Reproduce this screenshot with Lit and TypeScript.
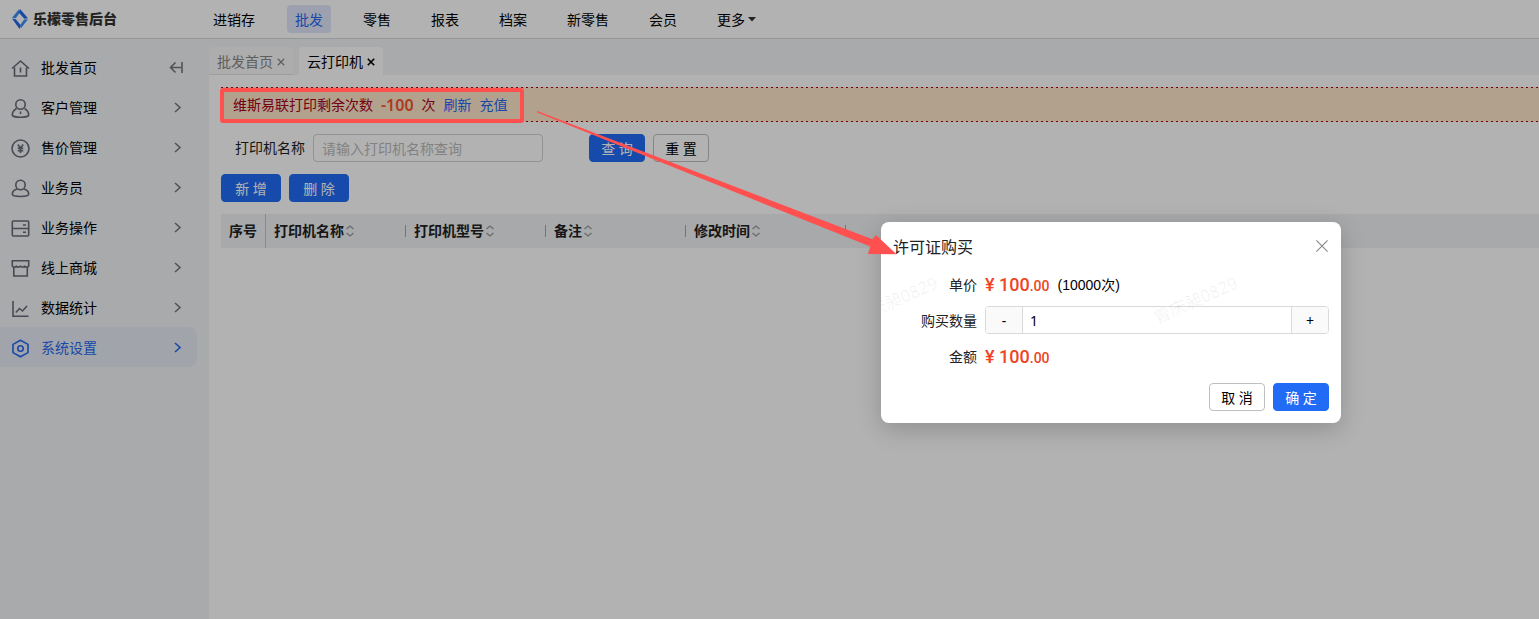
import { LitElement, html, svg, css } from "lit";
import { customElement, state } from "lit/decorators.js";
import { classMap } from "lit/directives/class-map.js";

const NAV = ["进销存", "批发", "零售", "报表", "档案", "新零售", "会员"];

const icons = {
  home: svg`<path d="M1 9.500 9.500 2l8.500 7.500M3.500 8.500V17h12V8.500M9.500 8.500v5"/>`,
  customer: svg`<circle cx="9.500" cy="5.500" r="4.700"/><path d="M5.500 9.500C3 11 1.300 13.300 1.300 16c0 1.200 3.500 2.300 8.200 2.300s8.200-1.100 8.200-2.300c0-2.700-1.700-5-4.200-6.500M9.500 12.500V15"/>`,
  price: svg`<circle cx="9.500" cy="9.500" r="8.500"/><path d="M6.800 5.500l2.700 3.500 2.700-3.500M9.500 9v5M6.800 9.300h5.400M6.800 11.600h5.400"/>`,
  staff: svg`<circle cx="9.500" cy="6" r="4.700"/><path d="M6 10C3 11 1.300 12.800 1.300 15c0 1.600 3.500 2.500 8.200 2.500s8.200-.9 8.200-2.500c0-2.200-1.700-4-4.700-5"/>`,
  operate: svg`<rect x="1.300" y="2" width="16.400" height="15" rx="1"/><path d="M1.300 9.500h16.400M12 6h3M12 13.200h3"/>`,
  shop: svg`<path d="M2.800 8v9h13.500V8M1.300 1.800h16.400V6.500c0 2.200-4 2.200-4 0 0 2-4.200 2-4.200 0 0 2-4.200 2-4.200 0 0 2.200-4 2.200-4 0z"/>`,
  chart: svg`<path d="M2 2v15.300h15.500M4.800 13.500 8.500 9.500l3 2.500 4.500-5"/>`,
  settings: svg`<path d="M9.500 1.200 17 5.400v8.200l-7.500 4.200L2 13.600V5.400z"/><circle cx="9.500" cy="9.500" r="2.700"/>`,
};

const MENU = [
  { label: "批发首页", icon: icons.home },
  { label: "客户管理", icon: icons.customer },
  { label: "售价管理", icon: icons.price },
  { label: "业务员", icon: icons.staff },
  { label: "业务操作", icon: icons.operate },
  { label: "线上商城", icon: icons.shop },
  { label: "数据统计", icon: icons.chart },
  { label: "系统设置", icon: icons.settings },
];

const COLUMNS = ["打印机名称", "打印机型号", "备注", "修改时间"];

@customElement("app-root")
export class AppRoot extends LitElement {
  @state() private quantity = 1;

  static styles = css`
    :host {
      display: block;
      position: relative;
      min-height: 100vh;
      overflow: hidden;
      font: 14px/20px "Noto Sans", "Noto Sans CJK SC", sans-serif;
      color: #000;
    }
    * { box-sizing: border-box; }
    button, input { font: inherit; color: inherit; }
    a { color: inherit; text-decoration: none; }
    svg { display: block; fill: none; flex: none; }
    .page { display: flex; flex-direction: column; min-height: 100vh; background: #f2f4f7; }
    .top { display: flex; align-items: center; height: 39px; background: #fff; border-bottom: 1px solid #d5d7db; }
    .brand { display: flex; align-items: center; gap: 5px; width: 205px; padding-left: 12px; font-weight: 900; color: #333; }
    .nav { display: flex; gap: 24px; }
    .nav a { display: flex; align-items: center; gap: 3px; height: 28px; padding: 2px 8px 0; border-radius: 4px; }
    .nav .on { background: #e1e7fb; color: #2468f2; }
    .body { display: flex; flex: 1; }
    .side { width: 209px; padding: 8px 12px 0 0; }
    .item { display: flex; align-items: center; gap: 11px; height: 40px; padding: 2px 14px 0 11px; border-radius: 0 8px 8px 0; }
    .item span { flex: 1; }
    .item .ic { stroke: #686b77; stroke-width: 1.6; }
    .item .go { stroke: #777; stroke-width: 1.6; }
    .item.on { background: #e9ebf5; color: #2468f2; }
    .item.on svg { stroke: #2468f2; }
    .main { flex: 1; min-width: 0; display: flex; flex-direction: column; }
    .tabs { display: flex; gap: 6px; padding-top: 8px; }
    .tab { display: flex; align-items: center; gap: 4px; height: 28px; padding: 2px 8px 0; border-radius: 4px 4px 0 0; background: #f8f8f9; color: #888; border-bottom: 1px solid #e2e3e6; }
    .tab svg { stroke: #888; stroke-width: 1.6; }
    .tab.on { background: #fff; color: #000; border-bottom-color: #fff; }
    .tab.on svg { stroke: #000; stroke-width: 2; }
    .panel { flex: 1; padding: 12px 0 0 12px; background: #fff; }
    .notice {
      --dots: repeating-linear-gradient(90deg, #a8001c 0 2px, transparent 2px 5px);
      display: flex; align-items: center; gap: 8px; height: 35px; padding-left: 12px; color: #a8001c;
      background: var(--dots) top / 100% 1px no-repeat, var(--dots) bottom / 100% 1px no-repeat, #ffe9cb;
    }
    .notice strong { font-size: 16px; font-weight: 600; color: #f5532e; }
    .notice a { color: #2468f2; }
    .search { display: flex; align-items: center; gap: 8px; padding: 12px 0 12px 14px; }
    .search label { color: #222; }
    .search input { width: 230px; height: 28px; margin-right: 38px; padding: 0 8px; border: 1px solid #d2d2d2; border-radius: 4px; background: #fff; }
    .search input::placeholder { color: #bbb; opacity: 1; }
    .btn { height: 28px; padding: 1px 10px 0; border: 1px solid #bfbfbf; border-radius: 4px; background: #fff; line-height: 20px; white-space: nowrap; }
    .btn.primary { border-color: #226cf5; background: #226cf5; color: #fff; }
    .tools { display: flex; gap: 8px; margin-bottom: 12px; }
    .tools .btn { width: 60px; }
    table { width: 100%; table-layout: fixed; border-collapse: separate; border-spacing: 0; }
    th { height: 34px; padding: 0 0 0 8px; background: #f0f2f5; text-align: left; font-weight: 700; color: #222; }
    th.no { width: 45px; border-right: 1px solid #c4c6ca; }
    th.col { width: 140px; }
    th.wide { width: 160px; }
    .cell { display: flex; align-items: center; gap: 1px; height: 12px; border-right: 1px solid #a5a7ad; }
    .cell svg { stroke: #999; stroke-width: 1.3; }
    .mask { position: absolute; inset: 0; display: flex; align-items: flex-start; justify-content: flex-end; padding: 222px 198px 0 0; background: rgba(0, 0, 0, 0.3); }
    .dialog { position: relative; width: 460px; padding: 12px; border-radius: 8px; background: #fff; box-shadow: 0 6px 24px rgba(0, 0, 0, 0.2); }
    .head { display: flex; align-items: center; justify-content: space-between; height: 24px; margin-bottom: 12px; }
    .head h2 { margin: 0; padding-top: 2px; font-size: 16px; line-height: 24px; font-weight: 400; color: #222; }
    .close { padding: 0; border: 0; background: none; }
    .close svg { stroke: #888; stroke-width: 0.8; }
    .rows { display: grid; grid-template-columns: 84px 1fr; gap: 8px; margin-bottom: 13px; }
    .name { padding-top: 1px; line-height: 28px; height: 28px; text-align: right; color: #222; }
    .value { display: flex; align-items: center; gap: 8px; height: 28px; padding-top: 2px; font-family: "Liberation Sans", "Noto Sans CJK SC", sans-serif; }
    .price { font: 500 18px/28px Roboto, sans-serif; color: #f04423; white-space: pre; }
    .price small { font-size: 14px; }
    .stepper { display: flex; height: 28px; border: 1px solid #d9d9d9; border-radius: 4px; overflow: hidden; }
    .stepper button { width: 36px; padding: 2px 0 0; border: 0; background: #fafafa; }
    .stepper input { flex: 1; min-width: 0; padding: 2px 7px 0; border: solid #d9d9d9; border-width: 0 1px; background: #fff; }
    .foot { display: flex; justify-content: flex-end; gap: 8px; }
    .foot .btn, .search .btn { width: 56px; }
    .marks { position: absolute; inset: 0; width: 100%; height: 100%; pointer-events: none; }
    .marks text { font-size: 17px; fill: #000; fill-opacity: 0.06; }
    .note { position: absolute; top: 0; left: 0; pointer-events: none; }
  `;

  private chevron() {
    return html`<svg class="go" width="10" height="12" viewBox="0 0 10 12"><path d="M2 1 7 5.500l-5 4.500" /></svg>`;
  }

  private cross(size: number) {
    return html`<svg width=${size} height=${size} viewBox="0 0 10 10"><path d="M1 1l8 8M9 1l-8 8" /></svg>`;
  }

  private step(by: number) {
    this.quantity = Math.max(1, this.quantity + by);
  }

  render() {
    return html`
      <div class="page">
        <header class="top">
          <div class="brand">
            <svg width="16" height="20" viewBox="0 0 16 20">
              <path fill="#3f8ef5" d="M7.200 0v4.500L3.800 9.200 0 8.800z" />
              <path fill="#2468e8" d="M0 9.600 3.800 10.300 9 16.500 7.500 20z" />
              <path fill="#2468e8" d="M8 0 16 9.200 12.200 9.800 6.800 3.500z" />
              <path fill="#3f8ef5" d="M16 10.200 8.800 19.500 8.600 15.500 12.200 10.600z" />
            </svg>
            <span>乐檬零售后台</span>
          </div>
          <nav class="nav">
            ${NAV.map((n) => html`<a href="#" class=${classMap({ on: n === "批发" })}>${n}</a>`)}
            <a href="#">更多<svg width="8" height="6" viewBox="0 0 8 6"><path fill="#333" d="M0 0h8L4 4.500z" /></svg></a>
          </nav>
        </header>
        <div class="body">
          <nav class="side">
            ${MENU.map(
              (m, i) => html`<a href="#" class="item ${classMap({ on: m.label === "系统设置" })}">
                <svg class="ic" width="19" height="19" viewBox="0 0 19 19">${m.icon}</svg>
                <span>${m.label}</span>
                ${i === 0
                  ? html`<svg class="go" width="14" height="12" viewBox="0 0 14 12"><path d="M6.500 0.500 1.500 5.500l5 5M1.500 5.500H12M13 0v11" /></svg>`
                  : this.chevron()}
              </a>`
            )}
          </nav>
          <main class="main">
            <div class="tabs">
              <a href="#" class="tab">批发首页${this.cross(8)}</a>
              <a href="#" class="tab on">云打印机${this.cross(8)}</a>
            </div>
            <section class="panel">
              <div class="notice">
                <span>维斯易联打印剩余次数</span><strong>-100</strong><span>次</span>
                <a href="#">刷新</a><a href="#">充值</a>
              </div>
              <form class="search">
                <label for="printer">打印机名称</label>
                <input id="printer" placeholder="请输入打印机名称查询" />
                <button type="button" class="btn primary">查 询</button>
                <button type="button" class="btn">重 置</button>
              </form>
              <div class="tools">
                <button class="btn primary">新 增</button>
                <button class="btn primary">删 除</button>
              </div>
              <table>
                <thead>
                  <tr>
                    <th class="no">序号</th>
                    ${COLUMNS.map(
                      (c, i) => html`<th class=${i === 3 ? "wide" : "col"}>
                        <div class="cell">${c}<svg width="10" height="12" viewBox="0 0 10 12"><path d="M1.500 4 5 1l3.500 3M1.500 8 5 11l3.500-3" /></svg></div>
                      </th>`
                    )}
                    <th></th>
                  </tr>
                </thead>
              </table>
            </section>
          </main>
        </div>
      </div>
      <div class="mask">
        <div class="dialog" role="dialog" aria-labelledby="title">
          <div class="head">
            <h2 id="title">许可证购买</h2>
            <button class="close" aria-label="关闭">${this.cross(14)}</button>
          </div>
          <div class="rows">
            <span class="name">单价</span>
            <div class="value"><span class="price">¥ 100<small>.00</small></span><span>(10000次)</span></div>
            <label class="name" for="qty">购买数量</label>
            <div class="stepper">
              <button @click=${() => this.step(-1)}>-</button>
              <input id="qty" .value=${String(this.quantity)} />
              <button @click=${() => this.step(1)}>+</button>
            </div>
            <span class="name">金额</span>
            <div class="value"><span class="price">¥ ${this.quantity * 100}<small>.00</small></span></div>
          </div>
          <div class="foot">
            <button class="btn">取 消</button>
            <button class="btn primary">确 定</button>
          </div>
          <svg class="marks">
            <text transform="translate(-24 102) rotate(-24)">曾庆昶0829</text>
            <text transform="translate(276 102) rotate(-24)">曾庆昶0829</text>
          </svg>
        </div>
      </div>
      <svg class="note" width="900" height="260" viewBox="0 0 900 260">
        <rect x="222" y="90" width="300" height="31" rx="1" stroke="#ff5050" stroke-width="4" />
        <path fill="#ff5050" d="M537.300 111 872.300 239.300 876 235l20.500 19.300L868 254l2.300-7.500L536.800 112.300z" />
      </svg>
    `;
  }
}
